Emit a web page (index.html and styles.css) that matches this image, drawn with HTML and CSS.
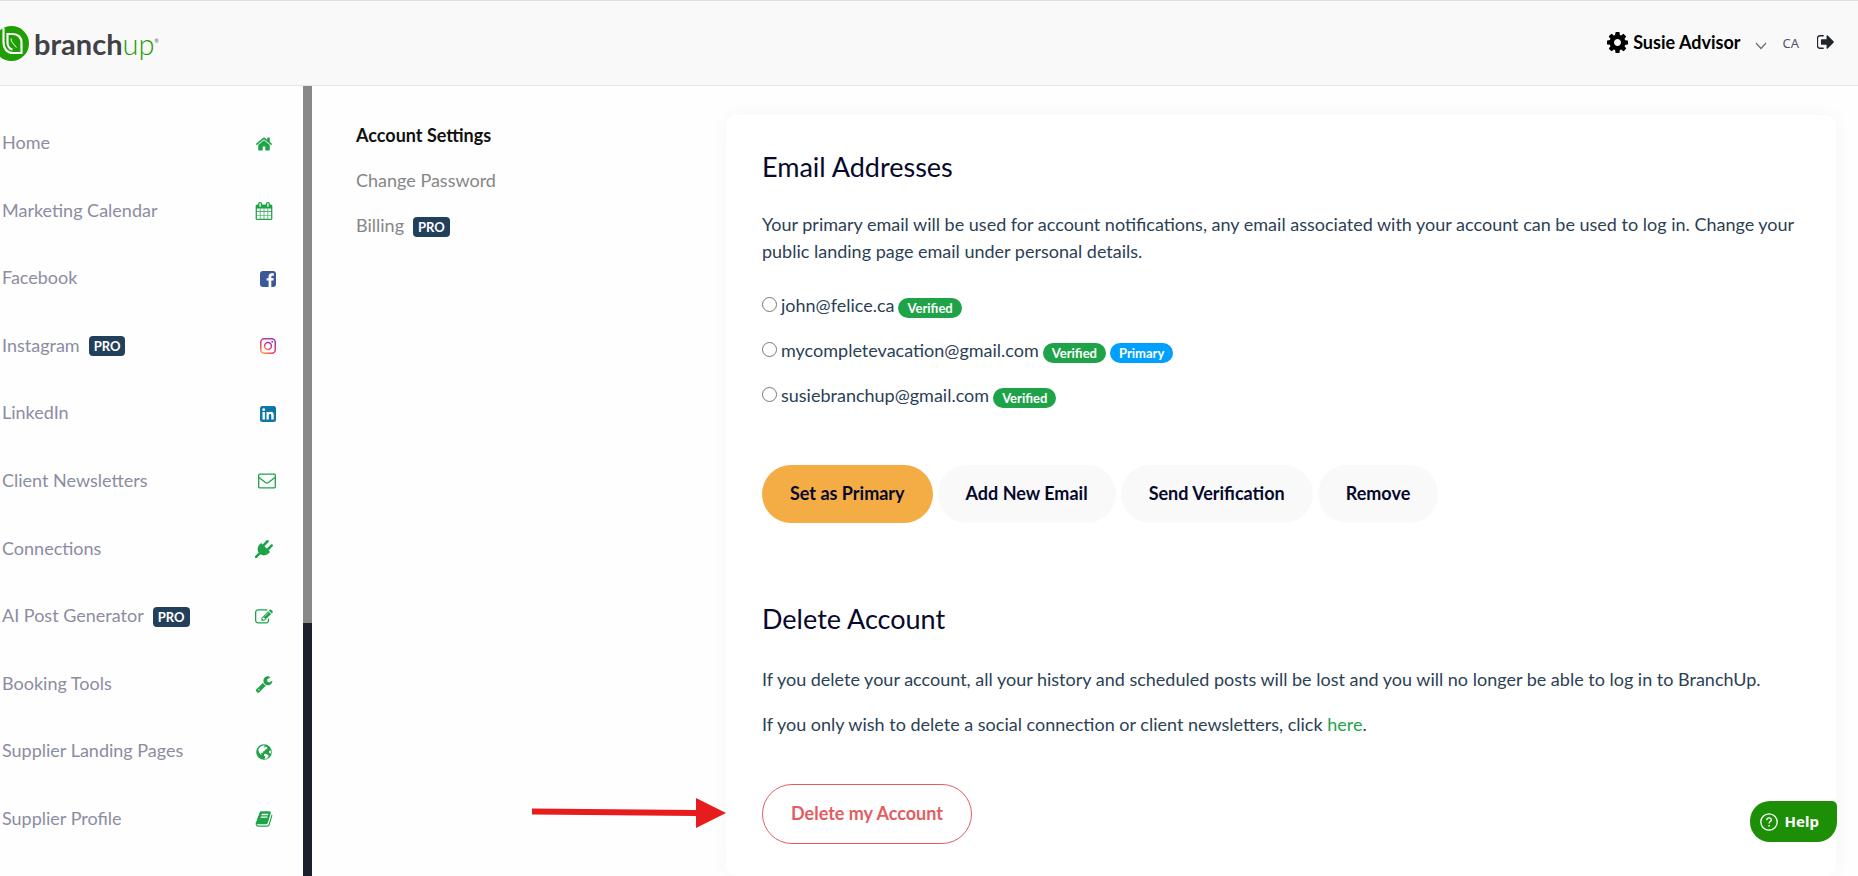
FILE: index.html
```html
<!DOCTYPE html>
<html lang="en">
<head>
<meta charset="utf-8">
<title>BranchUp – Account Settings</title>
<link rel="stylesheet" href="styles.css">
</head>
<body>
<header class="topbar">
  <a class="logo" href="#" aria-label="BranchUp">
    <svg class="logo-mark" viewBox="0 0 35 35" aria-hidden="true">
      <circle cx="17.500" cy="17.500" r="17.500" fill="#1f9f04"/>
      <g fill="none" stroke="#f9f9f9">
        <path d="M9.500 2v14.500c0 6 3.500 10.500 9.500 10.500h8.500V16.500c0-5-3.500-8.500-8.500-8.500h-5.500v8.500c0 3.500 2 6.500 5 7" stroke-width="2.200"/>
        <path d="M17 12.500c0 3 2 5 5.500 9" stroke-width="1"/>
      </g>
    </svg>
    <span class="logo-text">branch<span class="logo-up">up</span><sup class="logo-reg">®</sup></span>
  </a>
  <div class="account">
    <button class="user" type="button">
      <svg class="gear" viewBox="128 128 1536 1536" aria-hidden="true"><path d="M1152 896q0-106-75-181t-181-75-181 75-75 181 75 181 181 75 181-75 75-181zm512-109v222q0 12-8 23t-20 13l-185 28q-19 54-39 91 35 50 107 138 10 12 10 25t-9 23q-27 37-99 108t-94 71q-12 0-26-9l-138-108q-44 23-91 38-16 136-29 186-7 28-36 28h-222q-14 0-24.500-8.500t-11.500-21.500l-28-184q-49-16-90-37l-141 107q-10 9-25 9-14 0-25-11-126-114-165-168-7-10-7-23 0-12 8-23 15-21 51-66.500t54-70.500q-27-50-41-99l-183-27q-13-2-21-12.500t-8-23.500v-222q0-12 8-23t19-13l186-28q14-46 39-92-40-57-107-138-10-12-10-24 0-10 9-23 26-36 98.500-107.500t94.500-71.500q13 0 26 10l138 107q44-23 91-38 16-136 29-186 7-28 36-28h222q14 0 24.500 8.500t11.500 21.500l28 184q49 16 90 37l142-107q9-9 24-9 13 0 25 10 129 119 165 170 7 8 7 22 0 12-8 23-15 21-51 66.500t-54 70.500q26 50 41 98l183 28q13 2 21 12.500t8 23.500z"/></svg>
      <span>Susie Advisor</span>
      <svg class="chevron" viewBox="0 0 12 8" aria-hidden="true"><path d="M1 1l5 5.500L11 1" fill="none" stroke="#6b6880" stroke-width="1.200"/></svg>
    </button>
    <span class="country">CA</span>
    <a class="logout" href="#" aria-label="Log out"><svg viewBox="96 256 1536 1280" aria-hidden="true"><path d="M704 1440q0 4 1 20t.5 26.500-3 23.500-10 19.500-20.500 6.500h-320q-119 0-203.500-84.500t-84.500-203.500v-704q0-119 84.500-203.500t203.500-84.500h320q13 0 22.500 9.500t9.500 22.500q0 4 1 20t.5 26.500-3 23.500-10 19.500-20.500 6.500h-320q-66 0-113 47t-47 113v704q0 66 47 113t113 47h312l11.500 1 11.500 3 8 5.500 7 9 2 13.500zm928-544q0 26-19 45l-544 544q-19 19-45 19t-45-19-19-45v-288h-448q-26 0-45-19t-19-45v-384q0-26 19-45t45-19h448v-288q0-26 19-45t45-19 45 19l544 544q19 19 19 45z"/></svg></a>
  </div>
</header>
<div class="layout">
  <nav class="sidebar" aria-label="Main">
    <ul class="menu">
      <li><a href="#"><span>Home</span><svg class="icon" viewBox="0 0 1792 1792" aria-hidden="true"><path d="M1472 992v480q0 26-19 45t-45 19h-384v-384h-256v384h-384q-26 0-45-19t-19-45v-480q0-1 .5-3t.5-3l575-474 575 474q1 2 1 6zm223-69l-62 74q-8 9-21 11h-3q-13 0-21-7l-692-577-692 577q-12 8-24 7-13-2-21-11l-62-74q-8-10-7-23.500t11-21.500l719-599q32-26 76-26t76 26l244 204v-195q0-14 9-23t23-9h192q14 0 23 9t9 23v408l219 182q10 8 11 21.500t-7 23.500z"/></svg></a></li>
      <li><a href="#"><span>Marketing Calendar</span><svg class="icon" viewBox="0 0 1792 1792" aria-hidden="true"><path d="M192 1664h288v-288h-288v288zm352 0h320v-288h-320v288zm-352-352h288v-320h-288v320zm352 0h320v-320h-320v320zm-352-384h288v-288h-288v288zm736 736h320v-288h-320v288zm-384-736h320v-288h-320v288zm768 736h288v-288h-288v288zm-384-352h320v-320h-320v320zm-352-864v-288q0-13-9.500-22.500t-22.500-9.500h-64q-13 0-22.500 9.500t-9.500 22.500v288q0 13 9.500 22.500t22.500 9.500h64q13 0 22.500-9.500t9.500-22.500zm736 864h288v-320h-288v320zm-384-384h320v-288h-320v288zm384 0h288v-288h-288v288zm32-480v-288q0-13-9.500-22.500t-22.500-9.500h-64q-13 0-22.500 9.500t-9.500 22.500v288q0 13 9.500 22.500t22.500 9.500h64q13 0 22.500-9.500t9.500-22.500zm384-64v1280q0 52-38 90t-90 38h-1408q-52 0-90-38t-38-90v-1280q0-52 38-90t90-38h128v-96q0-66 47-113t113-47h64q66 0 113 47t47 113v96h384v-96q0-66 47-113t113-47h64q66 0 113 47t47 113v96h128q52 0 90 38t38 90z"/></svg></a></li>
      <li><a href="#"><span>Facebook</span><svg class="icon social" viewBox="0 0 16 16" aria-hidden="true"><rect width="16" height="16" rx="3" fill="#3b5998"/><path d="M8.600 16V9.600H6.600V7.200h2V5.600C8.600 3.500 9.900 2.300 11.800 2.300h2v2.400h-1.300c-.8 0-1.200.4-1.200 1v1.500h2.500l-.4 2.400h-2.100V16z" fill="#fff"/></svg></a></li>
      <li><a href="#"><span>Instagram</span><span class="pro">PRO</span><svg class="icon social" viewBox="0 0 16 16" aria-hidden="true"><defs><linearGradient id="ig" x1="0" y1="1" x2=".7" y2="0"><stop offset="0" stop-color="#fdb04c"/><stop offset=".4" stop-color="#ef3f5f"/><stop offset="1" stop-color="#a334b5"/></linearGradient></defs><g fill="none" stroke="url(#ig)" stroke-width="1.500"><rect x=".75" y=".75" width="14.500" height="14.500" rx="3.500"/><circle cx="8" cy="8" r="3.400"/></g><circle cx="12.200" cy="3.800" r="1" fill="#b636a5"/></svg></a></li>
      <li><a href="#"><span>LinkedIn</span><svg class="icon social" viewBox="0 0 16 16" aria-hidden="true"><rect width="16" height="16" rx="2.500" fill="#0e76a8"/><g fill="#fff"><circle cx="3.700" cy="3.700" r="1.400"/><path d="M2.500 6h2.400v7.500H2.500zM6.500 6h2.200v1c.5-.8 1.300-1.200 2.300-1.200 2 0 2.700 1.300 2.700 3.300v4.400h-2.400V9.600c0-1-.3-1.700-1.200-1.700s-1.300.7-1.300 1.700v3.900H6.500z"/></g></svg></a></li>
      <li><a href="#"><span>Client Newsletters</span><svg class="icon envelope" viewBox="0 0 18 16" aria-hidden="true"><g fill="none" stroke="#1fa349" stroke-width="1.300" stroke-linejoin="round"><rect x=".7" y="1.200" width="16.600" height="13.600" rx=".8"/><path d="M1 4.500l6.500 5q1.500 1 3 0l6.500-5"/></g></svg></a></li>
      <li><a href="#"><span>Connections</span><svg class="icon" viewBox="0 0 1792 1792" aria-hidden="true"><path d="M1755 453q37 38 37 90.500t-37 90.500l-401 400 150 150-160 160q-163 163-389.500 186.500t-411.500-100.500l-362 362h-181v-181l362-362q-124-185-100.500-411.500t186.500-389.500l160-160 150 150 400-401q38-37 91-37t90 37 37 90.500-37 90.500l-400 401 234 234 401-400q38-37 91-37t90 37z"/></svg></a></li>
      <li><a href="#"><span>AI Post Generator</span><span class="pro">PRO</span><svg class="icon" viewBox="0 0 1792 1792" aria-hidden="true"><path d="M888 1184l116-116-152-152-116 116v56h96v96h56zm440-720q-16-16-33 1l-350 350q-17 17-1 33t33-1l350-350q17-17 1-33zm80 594v190q0 119-84.500 203.500t-203.500 84.500h-832q-119 0-203.500-84.500t-84.500-203.500v-832q0-119 84.500-203.500t203.500-84.500h832q63 0 117 25 15 7 18 23 3 17-9 29l-49 49q-14 14-32 8-23-6-45-6h-832q-66 0-113 47t-47 113v832q0 66 47 113t113 47h832q66 0 113-47t47-113v-126q0-13 9-22l64-64q15-15 35-7t20 29zm-96-738l288 288-672 672h-288v-288zm444 132l-92 92-288-288 92-92q28-28 68-28t68 28l152 152q28 28 28 68t-28 68z"/></svg></a></li>
      <li><a href="#"><span>Booking Tools</span><svg class="icon" viewBox="0 0 1792 1792" aria-hidden="true"><path d="M448 1472q0-26-19-45t-45-19-45 19-19 45 19 45 45 19 45-19 19-45zm644-420l-682 682q-37 37-90 37-52 0-91-37l-106-108q-38-36-38-90 0-53 38-91l681-681q39 98 114.500 173.500t173.500 114.500zm634-435q0 39-23 106-47 134-164.500 217.500t-258.500 83.500q-185 0-316.500-131.500t-131.500-316.500 131.500-316.500 316.500-131.500q58 0 121.500 16.500t107.500 46.500q16 11 16 28t-16 28l-293 169v224l193 107q5-3 79-48.500t135.500-81 70.500-35.500q15 0 23.500 10t8.500 25z"/></svg></a></li>
      <li><a href="#"><span>Supplier Landing Pages</span><svg class="icon" viewBox="0 0 18 18" aria-hidden="true"><circle cx="9" cy="9" r="7.800"/><path d="M4 5l2.500-2 2.500-.7 1 .8-1.500 1.200 1.500.2.800-.9 1.700.9-.7 1.500-1.600.7-1 1.500-1.500.6.300 1.400-1.200-.4-.9.900 1 1.400-1.300-.5-1.600-2.400L3.300 7zM9 11.200l1.800-.4 2.800 1.600-.3 1.700-1.800 1.600-2 .3.700-2-1.200-1.500zM14 8l1.800-.6.300 2-1 1.300-1-1.200z" fill="#fff"/></svg></a></li>
      <li><a href="#"><span>Supplier Profile</span><svg class="icon" viewBox="0 0 1792 1792" aria-hidden="true"><path d="M1703 478q40 57 18 129l-275 906q-19 64-76.500 107.500t-122.500 43.500h-923q-77 0-148.500-53.500t-99.500-131.500q-24-67-2-127 0-4 3-27t4-37q1-8-3-21.500t-3-19.500q2-11 8-21t16.500-23.500 16.500-23.500q23-38 45-91.500t30-91.500q3-10 .5-30t-.5-28q3-11 17-28t17-23q21-36 42-92t25-90q1-9-2.500-32t.5-28q4-13 22-30.500t22-22.500q19-26 42.500-84.500t27.500-96.500q1-8-3-25.500t-2-26.500q2-8 9-18t18-23 17-21q8-12 16.500-30.500t15-35 16-36 19.500-32 26.500-23.500 36-11.500 47.500 5.500l-1 3q38-9 51-9h761q74 0 114 56t18 130l-274 906q-36 119-71.500 153.500t-128.500 34.500h-869q-27 0-38 15-11 16-1 43 24 70 144 70h923q29 0 56-15.500t35-41.500l300-987q7-22 5-57 38 15 59 43zm-1064 2q-4 13 2 22.500t20 9.500h608q13 0 25.500-9.500t16.500-22.500l21-64q4-13-2-22.500t-20-9.500h-608q-13 0-25.500 9.500t-16.500 22.500zm-83 256q-4 13 2 22.500t20 9.500h608q13 0 25.500-9.500t16.500-22.500l21-64q4-13-2-22.500t-20-9.500h-608q-13 0-25.500 9.500t-16.500 22.500z"/></svg></a></li>
    </ul>
    <div class="scrollbar" aria-hidden="true"><div class="thumb"></div></div>
  </nav>
  <main class="content">
    <nav class="subnav" aria-label="Settings">
      <a class="active" href="#">Account Settings</a>
      <a href="#">Change Password</a>
      <a href="#">Billing<span class="pro">PRO</span></a>
    </nav>
    <div class="panel">
      <section class="emails">
        <h2>Email Addresses</h2>
        <p>Your primary email will be used for account notifications, any email associated with your account can be used to log in. Change your public landing page email under personal details.</p>
        <div class="options">
          <div class="option"><input type="radio" name="email" id="e1"><label for="e1">john@felice.ca</label><span class="tag">Verified</span></div>
          <div class="option"><input type="radio" name="email" id="e2"><label for="e2">mycompletevacation@gmail.com</label><span class="tag">Verified</span><span class="tag primary">Primary</span></div>
          <div class="option"><input type="radio" name="email" id="e3"><label for="e3">susiebranchup@gmail.com</label><span class="tag">Verified</span></div>
        </div>
        <div class="actions">
          <button class="btn btn-main" type="button">Set as Primary</button>
          <button class="btn" type="button">Add New Email</button>
          <button class="btn" type="button">Send Verification</button>
          <button class="btn" type="button">Remove</button>
        </div>
      </section>
      <section class="delete">
        <h2>Delete Account</h2>
        <p>If you delete your account, all your history and scheduled posts will be lost and you will no longer be able to log in to BranchUp.</p>
        <p>If you only wish to delete a social connection or client newsletters, click <a href="#">here</a>.</p>
        <div class="danger">
          <button class="btn btn-danger" type="button">Delete my Account</button>
          <svg class="pointer" viewBox="0 0 194 30" aria-hidden="true"><path d="M0 10.500l164 1.500V0l30 15-30 15V18L0 16.500z" fill="#e71d1d"/></svg>
        </div>
      </section>
    </div>
  </main>
</div>
<button class="help" type="button">
  <svg viewBox="0 0 18 18" aria-hidden="true"><g fill="none" stroke="#fff" stroke-width="1.300"><circle cx="9" cy="9" r="8.200"/><path d="M6.700 7.200c0-1.500 1-2.300 2.300-2.300s2.300.8 2.300 2c0 1.700-2.200 1.700-2.200 3.500"/></g><circle cx="9.100" cy="12.800" r=".9" fill="#fff"/></svg>
  <span>Help</span>
</button>
</body>
</html>
```
FILE: styles.css
```css
* { box-sizing: border-box; }
body {
  margin: 0;
  height: 100vh;
  display: flex;
  flex-direction: column;
  overflow: hidden;
  background: #fefefe;
  color: #2c3f55;
  font: 18px/27px Lato, sans-serif;
}
a { color: inherit; text-decoration: none; }
button { font: inherit; border: 0; cursor: pointer; }
svg { display: block; flex: none; }

.topbar {
  flex: none;
  height: 86px;
  display: flex;
  align-items: center;
  justify-content: space-between;
  padding-right: 24px;
  background: #f9f9f9;
  border-top: 1px solid #dfdfdf;
  border-bottom: 1px solid #e6e6e6;
}
.logo { display: flex; align-items: center; gap: 5px; margin-left: -6px; }
.logo-mark { width: 35px; height: 35px; }
.logo-text { font-size: 29px; font-weight: 700; color: #414246; }
.logo-up { font-weight: 300; color: #1f9f04; }
.logo-reg { font-size: 5px; line-height: 1; vertical-align: 12px; color: #777; }
.account { display: flex; align-items: center; padding-bottom: 2px; }
.user {
  display: flex;
  align-items: center;
  gap: 5px;
  padding: 0;
  background: none;
  color: #000;
  font-weight: 700;
}
.gear { width: 21px; height: 21px; }
.chevron { width: 12px; height: 8px; margin: 7px 0 0 10px; }
.country { margin-left: 15px; font: 13px/27px "Noto Sans", sans-serif; color: #55536f; padding-top: 2px; }
.logout svg { width: 17px; height: 14px; margin-left: 18px; fill: #20262b; }

.layout { flex: 1; display: flex; min-height: 0; }
.sidebar { flex: none; width: 312px; display: flex; overflow: hidden; }
.menu {
  flex: 1;
  display: grid;
  grid-auto-rows: 1fr;
  align-items: center;
  margin: 0;
  padding: 23px 27px 24px 2px;
  list-style: none;
}
.menu a { display: flex; align-items: center; color: #8c8ca2; }
.icon { width: 18px; height: 18px; margin: 2px 3px 0 auto; fill: #1fa349; }
.social { width: 16px; height: 16px; margin-right: 0; }
.envelope { margin-right: 0; }
.pro {
  margin: 2px 0 0 9px;
  padding: 0 5px;
  border-radius: 4px;
  background: #223f5c;
  color: #fff;
  font-size: 13px;
  line-height: 20px;
  font-weight: 700;
}
.scrollbar { flex: none; width: 9px; background: #1b202c; }
.thumb { height: 68%; background: #888; }

.content { flex: 1; display: flex; padding: 29px 22px 0 44px; min-width: 0; }
.subnav { flex: 1; padding-top: 7px; display: flex; flex-direction: column; gap: 18px; color: #868686; }
.subnav a { display: flex; align-items: center; }
.subnav .active { color: #111; font-weight: 700; }
.panel {
  flex: none;
  width: 75%;
  padding: 36px;
  border-radius: 10px;
  background: #fff;
  box-shadow: 0 0 20px rgba(0, 0, 0, .04);
}
h2 { margin: 0 0 28px; font-size: 27px; line-height: 32px; font-weight: 400; color: #06092b; }
p { margin: 0 0 18px; }
.options { display: flex; flex-direction: column; gap: 18px; padding-top: 9px; }
.option { display: flex; align-items: center; gap: 4px; }
.option input { width: 15px; height: 15px; margin: 0 0 3px; }
.tag {
  margin-top: 4px;
  padding: 0 9px;
  border-radius: 10px;
  background: #1fa349;
  color: #fff;
  font-size: 13px;
  line-height: 20px;
  font-weight: 700;
}
.tag.primary { background: #00a0ff; }
.actions { display: flex; gap: 5px; padding-top: 56px; }
.btn {
  padding: 15px 28px 16px;
  border-radius: 30px;
  background: #f9f9f9;
  color: #06092b;
  font-weight: 700;
}
.btn-main { background: #f4ad45; }
.delete { padding-top: 80px; }
.delete h2 { margin-bottom: 31px; }
.delete p a { color: #1fa349; }
.danger { position: relative; padding-top: 28px; }
.btn-danger { background: none; border: 1px solid #e35d60; color: #e35d60; }
.pointer { position: absolute; right: 100%; bottom: 16px; width: 194px; margin-right: 36px; }

.help {
  position: fixed;
  right: 21px;
  bottom: 34px;
  display: flex;
  align-items: center;
  gap: 7px;
  padding: 7px 18px 7px 10px;
  border-radius: 20px 5px 20px 20px;
  background: #1d8f06;
  color: #fff;
  font: 700 15px/27px "Noto Sans", sans-serif;
}
.help svg { width: 18px; height: 18px; }
```
